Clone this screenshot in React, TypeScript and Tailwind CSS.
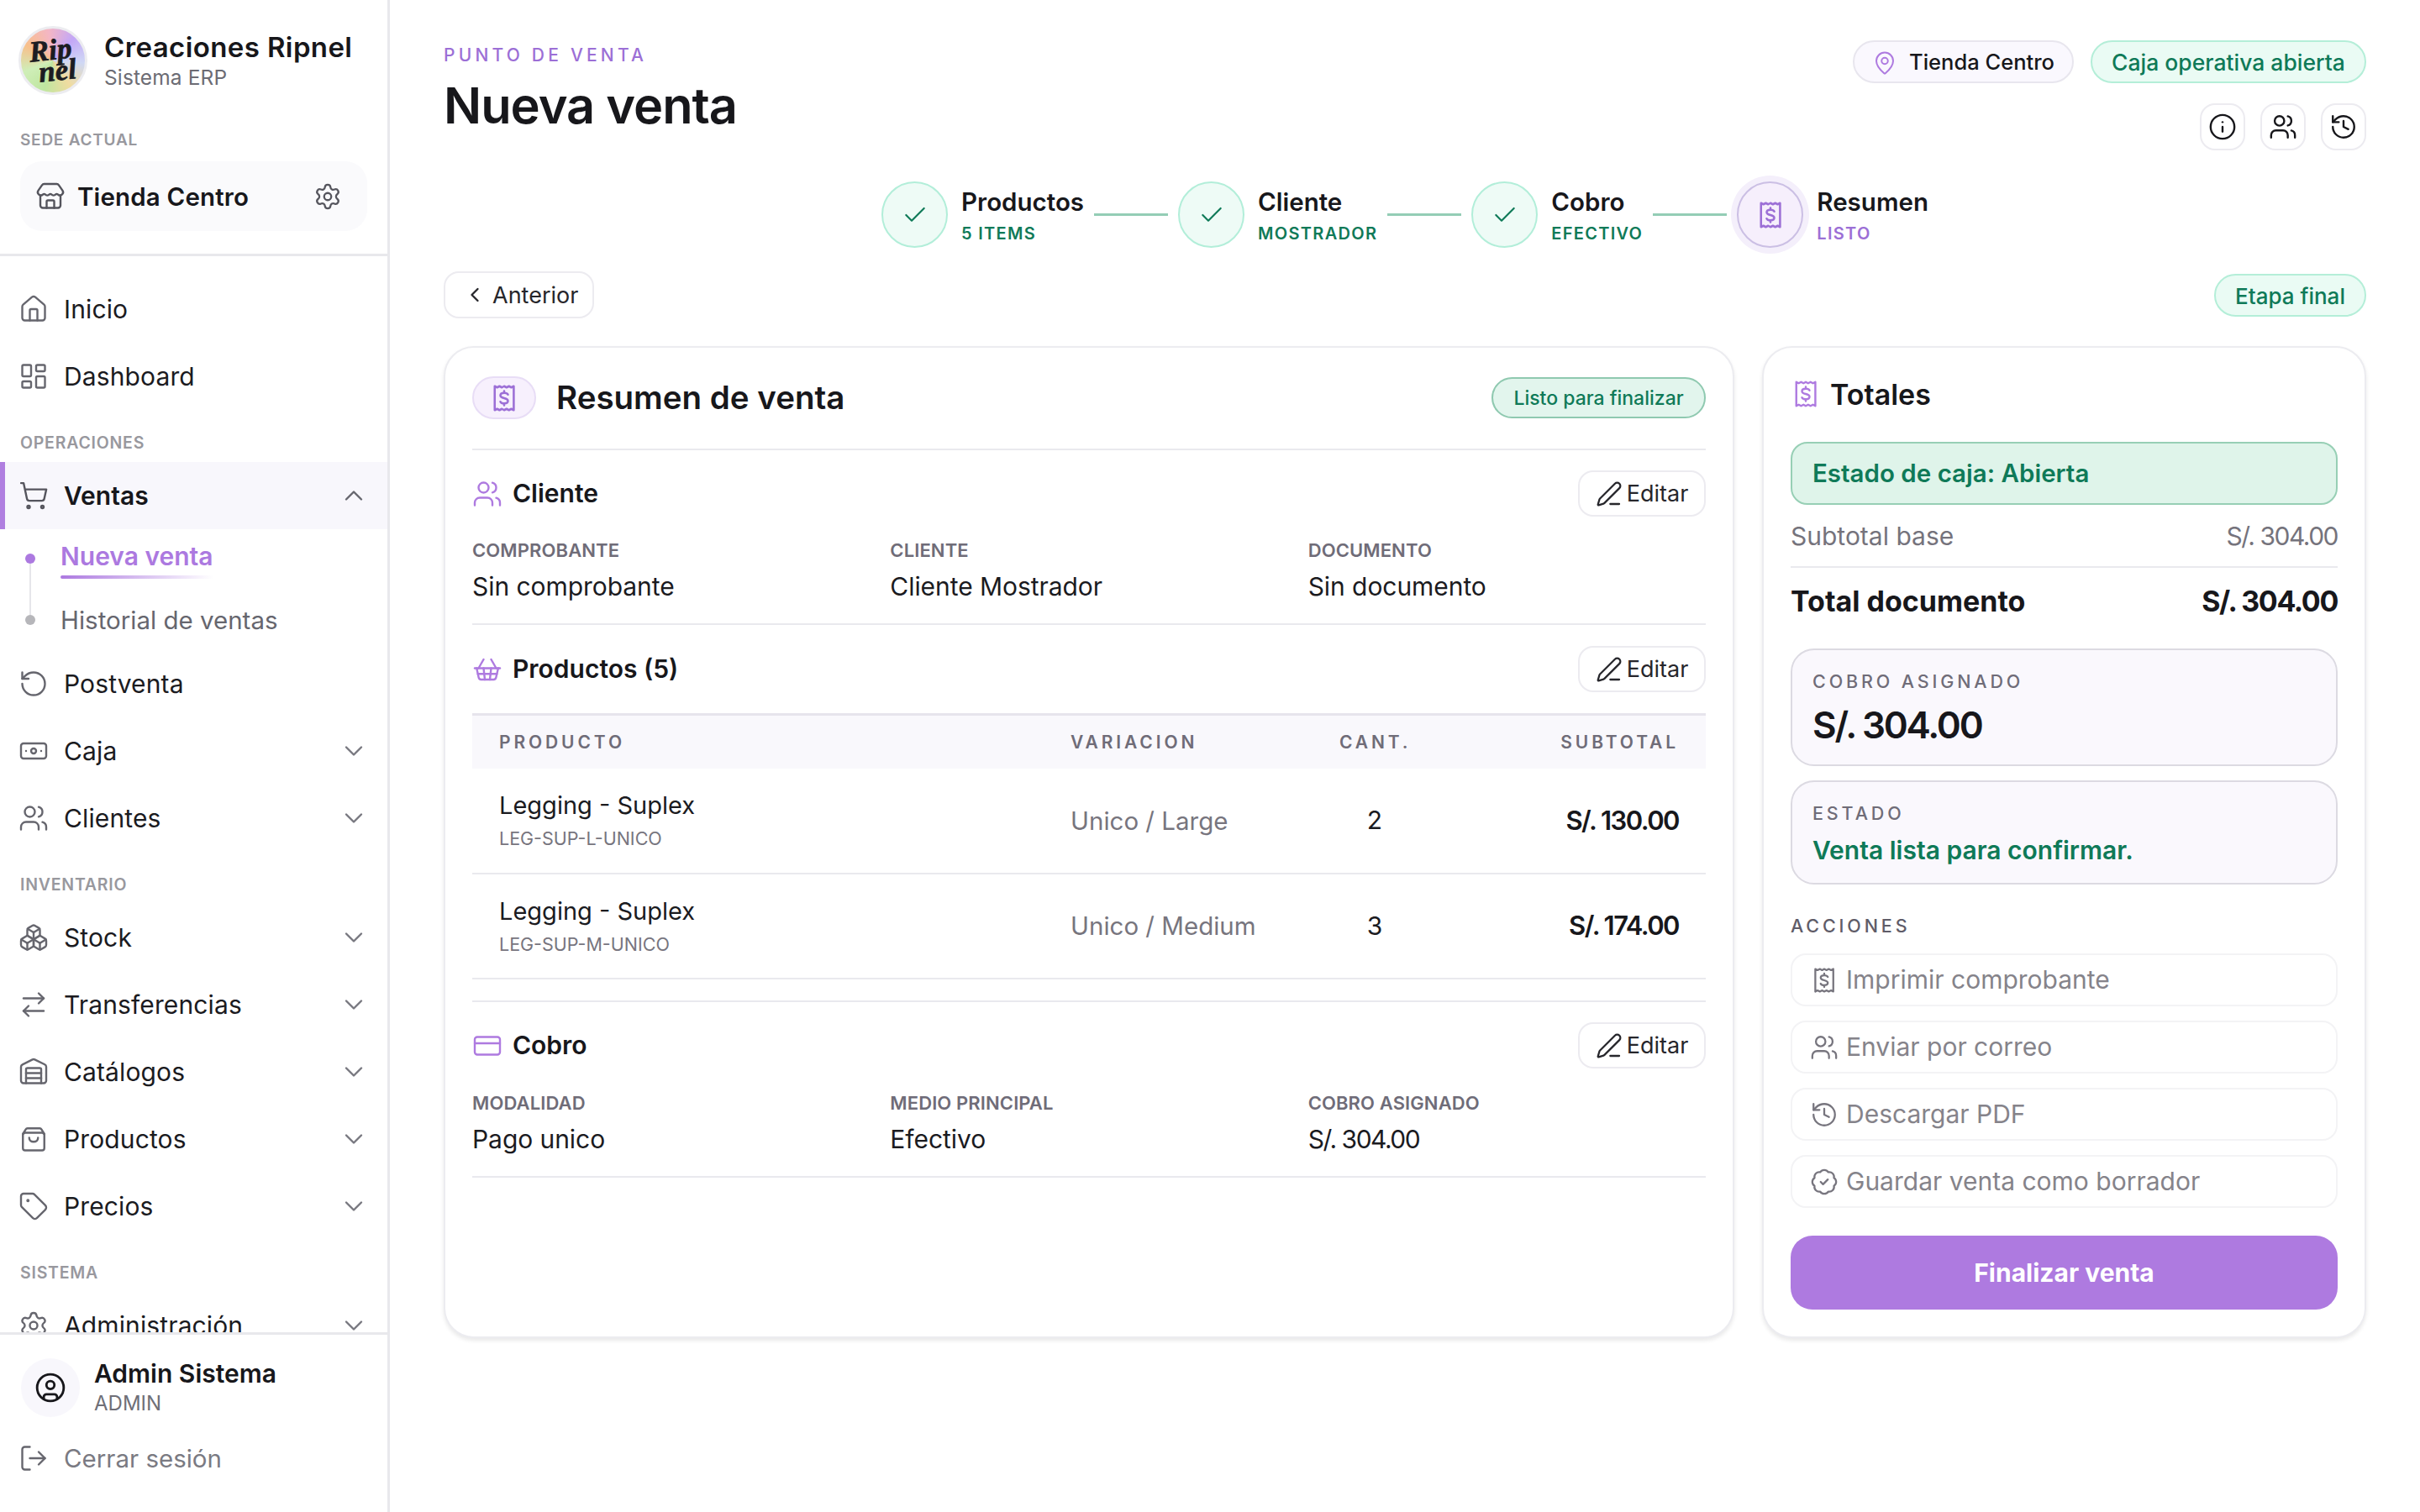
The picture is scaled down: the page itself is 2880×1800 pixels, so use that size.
import {
  ArrowRightLeft,
  Banknote,
  BadgeCheck,
  Boxes,
  Check,
  ChevronDown,
  ChevronLeft,
  ChevronUp,
  CircleUser,
  CreditCard,
  History,
  House,
  Info,
  LayoutDashboard,
  LogOut,
  MapPin,
  PenLine,
  RotateCcw,
  Settings,
  ShoppingBasket,
  ShoppingCart,
  Store,
  Tag,
  Users,
  Warehouse,
} from "lucide-react";
import type { ComponentType, ReactNode } from "react";

type IconProps = { className?: string; strokeWidth?: number };

function ReceiptDollar({ className, strokeWidth = 1.7 }: IconProps) {
  return (
    <svg viewBox="0 0 24 24" fill="none" stroke="currentColor" strokeWidth={strokeWidth} strokeLinejoin="round" strokeLinecap="round" className={className}>
      <path d="M4.5 2.5l1.9 1 1.9-1 1.9 1 1.8-1 1.9 1 1.9-1 1.9 1 1.9-1v19l-1.9-1-1.9 1-1.9-1-1.9 1-1.8-1-1.9 1-1.9-1-1.9 1z" />
      <path d="M15 9.2c-.4-.9-1.4-1.4-3-1.4-1.8 0-3 .8-3 2 0 2.9 6 1.5 6 4.4 0 1.2-1.2 2-3 2-1.6 0-2.6-.5-3-1.4M12 6.3v1.5M12 16.2v1.5" />
    </svg>
  );
}

function BoxBag({ className, strokeWidth = 1.6 }: IconProps) {
  return (
    <svg viewBox="0 0 24 24" fill="none" stroke="currentColor" strokeWidth={strokeWidth} strokeLinejoin="round" strokeLinecap="round" className={className}>
      <rect x="3.5" y="7" width="17" height="14" rx="1.8" />
      <path d="M3.5 8l2.2-3.6c.3-.5.8-.9 1.4-.9h9.8c.6 0 1.1.4 1.4.9L20.500 8" />
      <path d="M8.500 11c0 2 1.500 3.200 3.500 3.200s3.500-1.200 3.500-3.200" />
    </svg>
  );
}

type NavRow = { label: string; icon: ComponentType<IconProps>; chevron?: boolean };

function SideItem({ label, icon: Icon, chevron }: NavRow) {
  return (
    <div className="flex h-[80px] items-center pr-[22px] pl-[22px] text-[30px] tracking-[0.004em] text-[#1b1b1f]">
      <Icon className="size-[36px] shrink-0 text-[#66666e]" strokeWidth={1.6} />
      <span className="ml-[18px] flex-1">{label}</span>
      {chevron ? <ChevronDown className="size-[36px] text-[#77777f]" strokeWidth={1.6} /> : null}
    </div>
  );
}

function SideLabel({ children }: { children: ReactNode }) {
  return (
    <div className="flex h-[62px] items-start pt-[27px] pl-[24px] text-[19.5px] leading-[24px] font-semibold tracking-[0.04em] text-[#98989e]">
      {children}
    </div>
  );
}

function Sidebar() {
  return (
    <aside className="flex h-full w-[464px] shrink-0 flex-col border-r-[3px] border-[#e8e8ec]">
      <div className="h-[305px] shrink-0 border-b-[3px] border-[#e8e8ec] pt-[31px]">
        <div className="flex h-[82px] items-center pl-[22px]">
          <div className="flex size-[82px] shrink-0 items-center justify-center rounded-full border-[3px] border-[#ececf0] bg-[conic-gradient(from_300deg,#f8c08c,#f4b6c4,#c3a7f7,#cfd8f5,#f0dca0,#bfe6a0,#cfeeb8,#f8c08c)]">
            <span className="-rotate-6 [font-family:'Liberation_Serif',serif] text-[35px] leading-[25px] font-bold whitespace-pre text-[#1c1c22] italic [-webkit-text-stroke:0.7px_#1c1c22]">
              {"Rip\n nel"}
            </span>
          </div>
          <div className="ml-[20px] flex flex-col">
            <span className="text-[33px] leading-[40px] font-semibold tracking-[0.012em] text-[#17171b]">Creaciones Ripnel</span>
            <span className="text-[24.5px] leading-[32px] tracking-[0.005em] text-[#6c6c74]">Sistema ERP</span>
          </div>
        </div>
        <div className="mt-[42px] pl-[24px] text-[19px] leading-[24px] font-semibold tracking-[0.04em] text-[#98989e]">SEDE ACTUAL</div>
        <div className="mt-[13px] ml-[24px] flex h-[83px] w-[413px] items-center rounded-[26px] bg-[#fafafc] pr-[30px] pl-[18px]">
          <Store className="size-[36px] text-[#55555d]" strokeWidth={1.6} />
          <span className="ml-[14px] flex-1 pt-[1px] text-[29.5px] font-semibold tracking-[0.005em] text-[#17171b]">Tienda Centro</span>
          <Settings className="size-[34px] text-[#55555d]" strokeWidth={1.6} />
        </div>
      </div>

      <nav className="min-h-0 flex-1 overflow-hidden pt-[23px]">
        <SideItem label="Inicio" icon={House} />
        <SideItem label="Dashboard" icon={LayoutDashboard} />
        <SideLabel>OPERACIONES</SideLabel>
        <div className="flex h-[80px] items-center border-l-[6px] border-[#b07fe0] bg-[#f8f7fc] pr-[22px] pl-[16px] text-[30px] font-semibold text-[#17171b]">
          <ShoppingCart className="size-[36px] text-[#55555d]" strokeWidth={1.6} />
          <span className="ml-[18px] flex-1">Ventas</span>
          <ChevronUp className="size-[36px] text-[#66666e]" strokeWidth={1.6} />
        </div>
        <div className="flex h-[144px] pl-[30px]">
          <div className="flex w-[12px] flex-col items-center pt-[29px]">
            <span className="size-[12px] rounded-full bg-[#ac79e0]" />
            <span className="h-[61px] w-[2px] bg-[#e6e6ea]" />
            <span className="size-[12px] rounded-full bg-[#b6b6ba]" />
          </div>
          <div className="ml-[30px] flex flex-col gap-[12px]">
            <div className="flex h-[64px] w-fit flex-col pt-[14px]">
              <span className="text-[30px] leading-[36px] font-semibold text-[#ac79e0]">Nueva venta</span>
              <span className="mt-[5px] h-[4px] rounded-full bg-linear-to-r from-[#ac79e0] to-transparent" />
            </div>
            <div className="flex h-[64px] items-center text-[29.5px] text-[#66666e]">Historial de ventas</div>
          </div>
        </div>
        <SideItem label="Postventa" icon={RotateCcw} />
        <SideItem label="Caja" icon={Banknote} chevron />
        <SideItem label="Clientes" icon={Users} chevron />
        <SideLabel>INVENTARIO</SideLabel>
        <SideItem label="Stock" icon={Boxes} chevron />
        <SideItem label="Transferencias" icon={ArrowRightLeft} chevron />
        <SideItem label="Catálogos" icon={Warehouse} chevron />
        <SideItem label="Productos" icon={BoxBag} chevron />
        <SideItem label="Precios" icon={Tag} chevron />
        <SideLabel>SISTEMA</SideLabel>
        <SideItem label="Administración" icon={Settings} chevron />
      </nav>

      <div className="h-[214px] shrink-0 border-t-[3px] border-[#e8e8ec] pt-[27px]">
        <div className="flex items-center pl-[25px]">
          <div className="flex size-[70px] items-center justify-center rounded-full bg-[#f8f7fc]">
            <CircleUser className="size-[38px] text-[#17171b]" strokeWidth={1.8} />
          </div>
          <div className="ml-[17px] flex flex-col">
            <span className="text-[30px] leading-[38px] font-semibold text-[#17171b]">Admin Sistema</span>
            <span className="text-[24px] leading-[34px] text-[#6f6f77]">ADMIN</span>
          </div>
        </div>
        <div className="mt-[18px] flex h-[60px] items-center pl-[22px] text-[29.5px] text-[#7a7a82]">
          <LogOut className="size-[36px] -scale-x-100 rotate-180 text-[#66666e]" strokeWidth={1.6} />
          <span className="ml-[18px]">Cerrar sesión</span>
        </div>
      </div>
    </aside>
  );
}

function Step({ title, sub, done = true }: { title: string; sub: string; done?: boolean }) {
  return (
    <div className="flex items-center">
      {done ? (
        <div className="flex size-[79px] items-center justify-center rounded-full border-[2px] border-[#b2eed9] bg-[#eefbf6]">
          <Check className="size-[32px] text-[#0f7a58]" strokeWidth={1.6} />
        </div>
      ) : (
        <div className="flex size-[79px] items-center justify-center rounded-full border-[2px] border-[#cbbfe4] bg-[#f6effc] ring-[7px] ring-[#f4effb]">
          <ReceiptDollar className="size-[36px] text-[#9c6fd6]" />
        </div>
      )}
      <div className="ml-[16px] flex flex-col">
        <span className="text-[29.5px] leading-[40px] font-semibold text-[#17171b]">{title}</span>
        <span className={`mt-[4px] text-[20px] leading-[28px] font-semibold tracking-[0.065em] ${done ? "text-[#0f7a58]" : "text-[#9c6fd6]"}`}>{sub}</span>
      </div>
    </div>
  );
}

function Connector() {
  return <div className="mx-[12px] h-[3px] w-[88px] bg-[#93cdb5]" />;
}

function EditButton() {
  return (
    <button className="flex h-[55px] w-[152px] items-center justify-center gap-[5px] rounded-[18px] border-[2px] border-[#ecebf0] bg-white text-[27px] text-[#26262b]">
      <PenLine className="size-[32px]" strokeWidth={1.7} />
      <span className="pt-[1px]">Editar</span>
    </button>
  );
}

function SectionHead({ icon, title }: { icon: ReactNode; title: string }) {
  return (
    <div className="flex items-center justify-between">
      <div className="flex items-center gap-[12px]">
        {icon}
        <span className="text-[30px] font-semibold text-[#17171b]">{title}</span>
      </div>
      <EditButton />
    </div>
  );
}

function Field({ label, value, money }: { label: string; value: string; money?: boolean }) {
  return (
    <div className="flex flex-col">
      <span className="text-[22px] leading-[28px] font-semibold tracking-[0.005em] text-[#6f6c78]">{label}</span>
      <span className={`mt-[9px] text-[30px] leading-[40px] text-[#1b1b1f] ${money ? "tracking-[-0.05em]" : "tracking-[-0.002em]"}`}>{value}</span>
    </div>
  );
}

const rowGrid = "grid grid-cols-[680px_320px_84px_minmax(0,1fr)] px-[32px]";

const productRows = [
  { name: "Legging - Suplex", sku: "LEG-SUP-L-UNICO", variation: "Unico / Large", qty: 2, subtotal: "S/. 130.00" },
  { name: "Legging - Suplex", sku: "LEG-SUP-M-UNICO", variation: "Unico / Medium", qty: 3, subtotal: "S/. 174.00" },
];

function SummaryCard() {
  return (
    <section className="rounded-[36px] border-[2px] border-[#ececf0] bg-white px-[32px] pt-[34px] shadow-[0_3px_5px_rgba(0,0,0,0.09)]">
      <div className="flex h-[51px] items-center">
        <div className="flex h-[51px] w-[76px] items-center justify-center rounded-full border-[2px] border-[#e8ddf6] bg-[#f7f0fd]">
          <ReceiptDollar className="size-[36px] text-[#9c6fd6]" />
        </div>
        <h2 className="ml-[24px] flex-1 pt-[1px] text-[38.5px] font-semibold text-[#17171b]">Resumen de venta</h2>
        <span className="flex h-[49px] w-[255px] items-center justify-center rounded-full border-[2px] border-[#8fc9b0] bg-[#e2f5ed] pt-[1px] text-[23px] font-medium text-[#0f7a58]">Listo para finalizar</span>
      </div>

      <div className="mt-[35px] border-y-[2px] border-[#e9e9ee] pt-[24px] pb-[24px]">
        <SectionHead icon={<Users className="size-[36px] text-[#ae7ae0]" strokeWidth={1.6} />} title="Cliente" />
        <div className="mt-[26px] grid grid-cols-3 gap-[24px]">
          <Field label="COMPROBANTE" value="Sin comprobante" />
          <Field label="CLIENTE" value="Cliente Mostrador" />
          <Field label="DOCUMENTO" value="Sin documento" />
        </div>
      </div>

      <div className="pt-[25px]">
        <SectionHead icon={<ShoppingBasket className="size-[36px] text-[#ae7ae0]" strokeWidth={1.6} />} title="Productos (5)" />
        <div className={`${rowGrid} mt-[25px] h-[66px] items-center border-t-[3px] border-[#e6e4ec] bg-[#f9f8fc] text-[21px] font-semibold tracking-[0.185em] text-[#6f6c78]`}>
          <span>PRODUCTO</span>
          <span>VARIACION</span>
          <span>CANT.</span>
          <span className="text-right">SUBTOTAL</span>
        </div>
        {productRows.map((row) => (
          <div key={row.sku} className={`${rowGrid} h-[125.5px] items-center border-b-[2px] border-[#e9e9ee]`}>
            <div className="flex flex-col pt-[3px]">
              <span className="text-[29px] leading-[40px] text-[#1b1b1f]">{row.name}</span>
              <span className="text-[21.5px] leading-[38px] text-[#77757e]">{row.sku}</span>
            </div>
            <span className="text-[29.5px] text-[#77757e]">{row.variation}</span>
            <span className="text-center text-[30px] text-[#1b1b1f]">{row.qty}</span>
            <span className="text-right text-[31px] font-semibold tracking-[-0.05em] text-[#17171b]">{row.subtotal}</span>
          </div>
        ))}
      </div>

      <div className="mt-[25px] border-y-[2px] border-[#e9e9ee] pt-[24px] pb-[24px]">
        <SectionHead icon={<CreditCard className="size-[36px] text-[#ae7ae0]" strokeWidth={1.6} />} title="Cobro" />
        <div className="mt-[27px] grid grid-cols-3 gap-[24px]">
          <Field label="MODALIDAD" value="Pago unico" />
          <Field label="MEDIO PRINCIPAL" value="Efectivo" />
          <Field label="COBRO ASIGNADO" value="S/. 304.00" money />
        </div>
      </div>
    </section>
  );
}

const actions: { label: string; icon: ReactNode }[] = [
  { label: "Imprimir comprobante", icon: <ReceiptDollar className="size-[34px]" strokeWidth={1.6} /> },
  { label: "Enviar por correo", icon: <Users className="size-[34px]" strokeWidth={1.6} /> },
  { label: "Descargar PDF", icon: <History className="size-[34px]" strokeWidth={1.6} /> },
  { label: "Guardar venta como borrador", icon: <BadgeCheck className="size-[34px]" strokeWidth={1.6} /> },
];

function TotalsCard() {
  return (
    <section className="rounded-[36px] border-[2px] border-[#ececf0] bg-white px-[32px] pt-[35px] pb-[32px] shadow-[0_3px_5px_rgba(0,0,0,0.09)]">
      <div className="flex h-[40px] items-center gap-[11px]">
        <ReceiptDollar className="size-[36px] text-[#ae7ae0]" strokeWidth={1.6} />
        <h3 className="text-[34px] font-semibold text-[#17171b]">Totales</h3>
      </div>
      <div className="mt-[37px] flex h-[75px] items-center rounded-[20px] border-[2px] border-[#97cfb5] bg-[#dff4ea] px-[24px] text-[29.5px] font-semibold text-[#0f7a58]">
        Estado de caja: Abierta
      </div>
      <div className="mt-[17px] flex h-[40px] items-center justify-between text-[30px] text-[#75737c]">
        <span>Subtotal base</span>
        <span className="tracking-[-0.05em]">S/. 304.00</span>
      </div>
      <div className="mt-[16px] h-[2px] bg-[#e9e9ee]" />
      <div className="mt-[17px] flex h-[44px] items-center justify-between text-[34px] font-bold text-[#17171b]">
        <span>Total documento</span>
        <span className="tracking-[-0.04em]">S/. 304.00</span>
      </div>
      <div className="mt-[35px] h-[140px] rounded-[28px] border-[2px] border-[#dcdae2] bg-[#faf8fd] px-[24px] pt-[23px]">
        <div className="text-[21.5px] leading-[28px] font-medium tracking-[0.18em] text-[#6f6c78]">COBRO ASIGNADO</div>
        <div className="mt-[10px] text-[44px] leading-[56px] font-semibold tracking-[-0.05em] text-[#17171b]">S/. 304.00</div>
      </div>
      <div className="mt-[17px] h-[124px] rounded-[28px] border-[2px] border-[#dcdae2] bg-[#faf8fd] px-[24px] pt-[23px]">
        <div className="text-[21.5px] leading-[28px] font-medium tracking-[0.18em] text-[#6f6c78]">ESTADO</div>
        <div className="mt-[10px] text-[30px] leading-[40px] font-semibold text-[#0f7a58]">Venta lista para confirmar.</div>
      </div>
      <div className="mt-[35px] text-[21.5px] leading-[28px] font-medium tracking-[0.18em] text-[#5f5c68]">ACCIONES</div>
      <div className="mt-[19px] flex flex-col gap-[17px]">
        {actions.map((action) => (
          <div key={action.label} className="flex h-[63px] items-center gap-[9px] rounded-[18px] border-[2px] border-[#f3f3f5] bg-white pl-[21px] text-[30px] text-[#85838a]">
            <span className="text-[#77757e]">{action.icon}</span>
            {action.label}
          </div>
        ))}
      </div>
      <button className="mt-[33px] h-[88px] w-full rounded-[26px] bg-[#ae7ae0] text-[30px] font-bold text-white">Finalizar venta</button>
    </section>
  );
}

export default function App() {
  return (
    <div className="flex h-screen w-full overflow-hidden bg-white [font-family:Inter,sans-serif]">
      <Sidebar />
      <main className="min-w-0 flex-1 px-[64px] pt-[48px]">
        <header className="flex justify-between">
          <div>
            <p className="pt-[2px] text-[21px] leading-[32px] font-medium tracking-[0.2em] text-[#9c6fd6]">PUNTO DE VENTA</p>
            <h1 className="mt-[8px] text-[59.5px] leading-[70px] font-semibold tracking-[-0.017em] text-[#17171b]">Nueva venta</h1>
          </div>
          <div className="flex flex-col items-end gap-[24px]">
            <div className="flex gap-[20px]">
              <span className="flex h-[51px] w-[263px] items-center justify-center gap-[14px] rounded-full border-[2px] border-[#e8e6ee] bg-[#faf8fe] pt-[2px] text-[25.5px] font-medium text-[#17171b]">
                <MapPin className="size-[30px] text-[#ae7ae0]" strokeWidth={1.6} />
                Tienda Centro
              </span>
              <span className="flex h-[51px] w-[328px] items-center justify-center rounded-full border-[2px] border-[#b4eed8] bg-[#eafbf4] pt-[2px] text-[26.5px] font-medium text-[#0f7a58]">Caja operativa abierta</span>
            </div>
            <div className="flex gap-[18px]">
              {[Info, Users, History].map((Icon, index) => (
                <span key={index} className="flex h-[56px] w-[54px] items-center justify-center rounded-[18px] border-[2px] border-[#ecebf0] text-[#17171b]">
                  <Icon className="size-[34px]" strokeWidth={1.7} />
                </span>
              ))}
            </div>
          </div>
        </header>

        <div className="mt-[37px] flex items-center justify-center">
          <Step title="Productos" sub="5 ITEMS" />
          <Connector />
          <Step title="Cliente" sub="MOSTRADOR" />
          <Connector />
          <Step title="Cobro" sub="EFECTIVO" />
          <Connector />
          <Step title="Resumen" sub="LISTO" done={false} />
        </div>

        <div className="mt-[28px] flex items-center justify-between">
          <button className="flex h-[56px] w-[179px] items-center gap-[7px] rounded-[18px] border-[2px] border-[#ecebf0] bg-white pl-[21px] text-[27px] text-[#26262b]">
            <ChevronLeft className="size-[28px]" strokeWidth={2} />
            <span className="pt-[2px]">Anterior</span>
          </button>
          <span className="flex h-[51px] w-[181px] items-center justify-center rounded-full border-[2px] border-[#b4eed8] bg-[#eafbf4] pt-[2px] text-[26px] font-medium text-[#0f7a58]">Etapa final</span>
        </div>

        <div className="mt-[33px] grid grid-cols-[minmax(0,1fr)_719px] gap-[33px]">
          <SummaryCard />
          <TotalsCard />
        </div>
      </main>
    </div>
  );
}
